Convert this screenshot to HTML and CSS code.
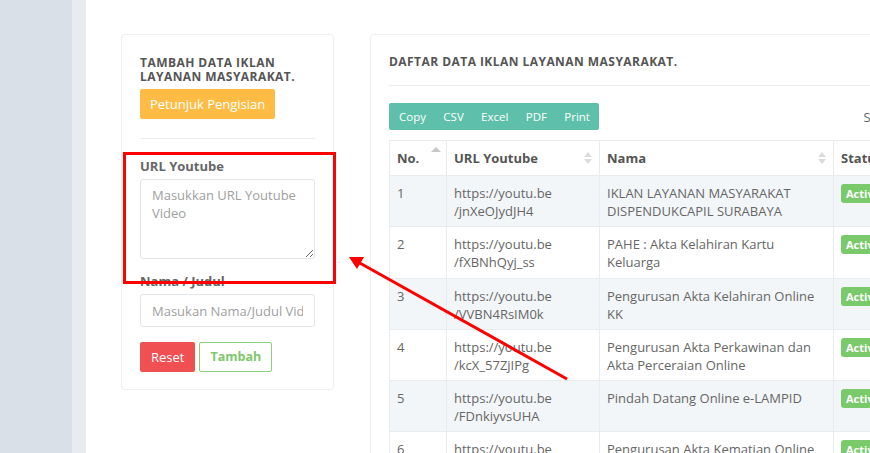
FILE: index.html
```html
<!DOCTYPE html>
<html>
<head>
<meta charset="utf-8">
<link rel="stylesheet" href="styles.css">
</head>
<body>
<div class="layout">
  <aside class="sidebar"></aside>
  <div class="strip"></div>
  <main class="main">
    <section class="card form-card">
      <h4 class="card-title">TAMBAH DATA IKLAN LAYANAN MASYARAKAT.</h4>
      <button class="btn btn-warning">Petunjuk Pengisian</button>
      <hr class="divider">
      <div class="form-group first">
        <label class="label">URL Youtube</label>
        <textarea class="control textarea" placeholder="Masukkan URL Youtube Video"></textarea>
      </div>
      <div class="form-group">
        <label class="label">Nama / Judul</label>
        <input class="control" type="text" placeholder="Masukan Nama/Judul Video">
      </div>
      <div class="actions">
        <button class="btn btn-danger">Reset</button>
        <button class="btn btn-outline-success">Tambah</button>
      </div>
    </section>

    <section class="card table-card">
      <h4 class="card-title">DAFTAR DATA IKLAN LAYANAN MASYARAKAT.</h4>
      <hr class="divider wide">
      <div class="toolbar">
        <div class="btn-group">
          <span class="gbtn">Copy</span><span class="gbtn">CSV</span><span class="gbtn">Excel</span><span class="gbtn">PDF</span><span class="gbtn">Print</span>
        </div>
        <div class="filter">Search: <span class="search-box"></span></div>
      </div>
      <table class="table">
        <colgroup><col class="c1"><col class="c2"><col class="c3"><col class="c4"></colgroup>
        <thead>
          <tr>
            <th><span class="th-in">No.<span class="sort asc"></span></span></th>
            <th><span class="th-in">URL Youtube<span class="sort both"></span></span></th>
            <th><span class="th-in">Nama<span class="sort both"></span></span></th>
            <th><span class="th-in">Status<span class="sort both"></span></span></th>
          </tr>
        </thead>
        <tbody>
          <tr class="odd"><td>1</td><td>https://youtu.be<br>/jnXeOJydJH4</td><td>IKLAN LAYANAN MASYARAKAT DISPENDUKCAPIL SURABAYA</td><td><span class="badge">Active</span></td></tr>
          <tr><td>2</td><td>https://youtu.be<br>/fXBNhQyj_ss</td><td>PAHE : Akta Kelahiran Kartu Keluarga</td><td><span class="badge">Active</span></td></tr>
          <tr class="odd"><td>3</td><td>https://youtu.be<br>/VVBN4RsIM0k</td><td>Pengurusan Akta Kelahiran Online KK</td><td><span class="badge">Active</span></td></tr>
          <tr><td>4</td><td>https://youtu.be<br>/kcX_57ZjIPg</td><td>Pengurusan Akta Perkawinan dan Akta Perceraian Online</td><td><span class="badge">Active</span></td></tr>
          <tr class="odd"><td>5</td><td>https://youtu.be<br>/FDnkiyvsUHA</td><td>Pindah Datang Online e-LAMPID</td><td><span class="badge">Active</span></td></tr>
          <tr><td>6</td><td>https://youtu.be<br>/abcdefghijk</td><td>Pengurusan Akta Kematian Online</td><td><span class="badge">Active</span></td></tr>
        </tbody>
      </table>
    </section>
  </main>
</div>

<div class="highlight"></div>
<svg class="arrow" width="870" height="453" viewBox="0 0 870 453">
  <line x1="567" y1="379" x2="358" y2="262" stroke="#f00" stroke-width="3"/>
  <polygon points="349,257 364,257 357,269" fill="#f00"/>
</svg>
</body>
</html>
```

FILE: styles.css
```css
* { box-sizing: border-box; }
html, body { margin: 0; padding: 0; }
body {
  width: 870px;
  height: 453px;
  overflow: hidden;
  position: relative;
  font-family: "Open Sans", "Noto Sans", sans-serif;
  font-size: 13px;
  color: #666;
  background: #fff;
}
.layout { display: flex; height: 453px; }
.sidebar { width: 72px; flex: none; background: #d9e0e7; }
.strip { width: 14px; flex: none; background: #e8ecf0; }
.main {
  flex: none;
  display: flex;
  align-items: flex-start;
  gap: 36px;
  padding: 34px 0 0 35px;
}
.card {
  flex: none;
  background: #fff;
  border: 1px solid #eceef0;
  border-radius: 4px;
}
.form-card { width: 213px; padding: 19px 18px 17px 18px; }
.table-card { width: 703px; padding: 18px 18px 0 18px; height: 440px; overflow: hidden; }
.card-title {
  margin: 0;
  font-size: 12px;
  font-weight: 700;
  letter-spacing: 0.45px;
  line-height: 14px;
  color: #555;
  padding-top: 2px;
}
.btn {
  font-family: inherit;
  font-size: 13px;
  line-height: 18px;
  border-radius: 2px;
  border: 1px solid transparent;
  cursor: pointer;
}
.btn-warning { margin-top: 5px; background: #ffbc45; color: #fff; height: 30px; padding: 5px 10px; border: 0; }
.divider { border: 0; border-top: 1px solid #ebedef; margin: 19px 0 18px 0; }
.divider.wide { margin: 16px 0 17px 0; }
.form-group { margin-bottom: 13px; }
.label {
  display: block;
  font-weight: 700;
  color: #666;
  line-height: 18px;
  margin-bottom: 4px;
}
.control {
  display: block;
  width: 175px;
  font-family: inherit;
  font-size: 13px;
  color: #666;
  border: 1px solid #e3e6e9;
  border-radius: 3px;
  padding: 7px 11px;
  line-height: 18px;
  height: 33px;
  background: #fff;
}
.control::placeholder { color: #a0a0a0; }
.textarea { height: 80px; resize: vertical; padding: 6px 11px; }
.actions { display: flex; gap: 4px; margin-top: 15px; }
.btn-danger { background: #f05052; color: #fff; height: 30px; padding: 5px 10px; }
.btn-outline-success { background: #fff; color: #7ec86c; border-color: #8cd07b; font-weight: 700; font-size: 12.5px; height: 30px; padding: 5px 10px; }

.toolbar { display: flex; align-items: center; justify-content: space-between; }
.btn-group {
  display: flex;
  background: #5ebfaa;
  border-radius: 2px;
  height: 27px;
  width: 210px;
  align-items: center;
  justify-content: space-between;
  padding: 0 9px 0 10px;
}
.gbtn { color: #fff; font-size: 11.5px; line-height: 27px; }
.filter { display: flex; align-items: center; gap: 6px; color: #666; font-size: 13px; }
.search-box { display: inline-block; width: 140px; height: 27px; border: 1px solid #e3e6e9; border-radius: 3px; }

.table {
  margin-top: 10px;
  border-collapse: collapse;
  table-layout: fixed;
  width: 600px;
}
.c1 { width: 57px; }
.c2 { width: 153px; }
.c3 { width: 234px; }
.c4 { width: 156px; }
.table th, .table td {
  border: 1px solid #e9ecef;
  padding: 8px 7px;
  line-height: 18px;
  text-align: left;
  vertical-align: top;
}
.table th { font-weight: 700; color: #555; white-space: nowrap; overflow: hidden; }
.th-in { display: flex; align-items: center; justify-content: space-between; }
.table td { color: #666; height: 51.3px; padding: 8px 7px 6px 7px; }
.table tr.odd td { background: #f3f6f9; }
.sort { position: relative; display: inline-block; width: 8px; height: 12px; }
.sort.asc::before {
  content: ""; position: absolute; left: 0; top: -5px;
  border-left: 5px solid transparent; border-right: 5px solid transparent;
  border-bottom: 5px solid #c8c8c8;
}
.sort.both::before {
  content: ""; position: absolute; left: 0; top: 0;
  border-left: 4px solid transparent; border-right: 4px solid transparent;
  border-bottom: 5px solid #dcdcdc;
}
.sort.both::after {
  content: ""; position: absolute; left: 0; top: 7px;
  border-left: 4px solid transparent; border-right: 4px solid transparent;
  border-top: 5px solid #dcdcdc;
}
.badge {
  display: inline-block;
  background: #7ac96a;
  color: #fff;
  font-size: 11px;
  font-weight: 700;
  line-height: 15px;
  padding: 2px 5px;
  border-radius: 3px;
  margin-top: 0;
}
.highlight {
  position: absolute;
  left: 123px;
  top: 152px;
  width: 213px;
  height: 132px;
  border: 3px solid #f00;
}
.arrow { position: absolute; left: 0; top: 0; }
```
